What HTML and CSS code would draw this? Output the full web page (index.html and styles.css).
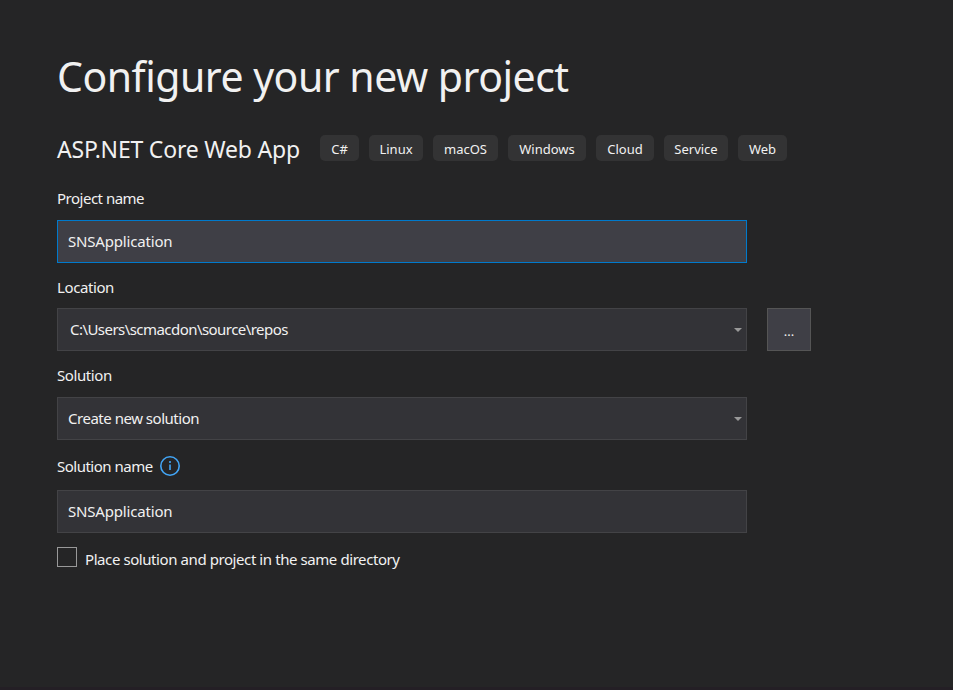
FILE: index.html
```html
<!DOCTYPE html>
<html lang="en">
<head>
<meta charset="utf-8">
<title>Configure your new project</title>
<link rel="stylesheet" href="styles.css">
</head>
<body>
<main class="dialog">
  <h1 class="title">Configure your new project</h1>
  <div class="template">
    <h2 class="template-name">ASP.NET Core Web App</h2>
    <ul class="tags">
      <li class="tag tag-csharp">C#</li>
      <li class="tag tag-linux">Linux</li>
      <li class="tag tag-macos">macOS</li>
      <li class="tag tag-windows">Windows</li>
      <li class="tag tag-cloud">Cloud</li>
      <li class="tag tag-service">Service</li>
      <li class="tag tag-web">Web</li>
    </ul>
  </div>
  <div class="label"><span class="t-project">Project name</span></div>
  <div class="field focused"><span class="t-sns">SNSApplication</span></div>
  <div class="label label-location"><span>Location</span></div>
  <div class="row">
    <div class="field path"><span class="t-path">C:\Users\scmacdon\source\repos</span><svg class="arrow" width="8" height="4" viewBox="0 0 8 4"><path d="M0 0h8L4 4z"/></svg></div>
    <button class="browse">...</button>
  </div>
  <div class="label label-solution"><span>Solution</span></div>
  <div class="field"><span class="t-create">Create new solution</span><svg class="arrow" width="8" height="4" viewBox="0 0 8 4"><path d="M0 0h8L4 4z"/></svg></div>
  <div class="label label-name"><span class="t-project">Solution name</span>
    <svg class="info" width="20" height="20" viewBox="0 0 20 20"><circle cx="10" cy="10" r="9.2"/><path d="M10 8.5V14M10 5v2"/></svg>
  </div>
  <div class="field"><span class="t-sns">SNSApplication</span></div>
  <div class="check"><span class="box"></span><span class="t-place">Place solution and project in the same directory</span></div>
</main>
</body>
</html>
```
FILE: styles.css
```css
* { box-sizing: border-box; }
body { margin: 0; background: #252526; color: #f1f1f1; font: 15px/20px "Noto Sans", sans-serif; }
.dialog { height: 690px; padding: 48px 0 0 57px; white-space: nowrap; overflow: hidden; border-bottom: 3px solid #241f25; }
.title { margin: 0; height: 56px; font-size: 41px; line-height: 56px; font-weight: 400; letter-spacing: -0.5px; }
.template { display: flex; align-items: center; height: 26px; margin-top: 31px; }
.template-name { margin: 0; width: 263px; font-size: 23px; line-height: 26px; padding-top: 1px; font-weight: 400; letter-spacing: -0.2px; }
.tags { display: flex; gap: 10px; margin: 0; padding: 0; list-style: none; }
.tag { height: 26px; border-radius: 5px; background: #333334; font-size: 13px; line-height: 28px; text-align: center; }
.tag-csharp { width: 39px; }
.tag-linux { width: 54px; }
.tag-macos { width: 65px; }
.tag-windows { width: 78px; }
.tag-cloud { width: 58px; }
.tag-service { width: 64px; }
.tag-web { width: 49px; }
.label { display: flex; align-items: center; height: 20px; margin: 27px 0 12px; letter-spacing: -0.4px; }
.label-location { margin: 14px 0 11px; }
.label-solution { margin: 14px 0 12px; }
.label-name { margin: 16px 0 14px; }
.t-project { letter-spacing: -0.5px; }
.t-sns { letter-spacing: -0.18px; }
.t-path { letter-spacing: -0.55px; }
.t-create { letter-spacing: -0.48px; }
.field { display: flex; align-items: center; justify-content: space-between; width: 690px; height: 43px; padding: 0 4px 0 10px; border: 1px solid #434346; background: #333337; }
.field span { padding-bottom: 2px; }
.path { padding-left: 12px; }
.focused { border-color: #007acc; background: #3f3f46; }
.row { display: flex; gap: 20px; }
.browse { width: 44px; height: 43px; padding: 3px 0 0; border: 1px solid #555; background: #3f3f46; color: #f1f1f1; font: 13px/20px "Noto Sans", sans-serif; }
.arrow { fill: #999; }
.info { margin-left: 7px; fill: none; stroke: #42a5f5; stroke-width: 1.6; }
.check { display: flex; align-items: flex-start; gap: 8px; margin-top: 14px; letter-spacing: -0.42px; }
.box { width: 20px; height: 20px; border: 1px solid #999; }
.t-place { margin-top: 2px; }
```
